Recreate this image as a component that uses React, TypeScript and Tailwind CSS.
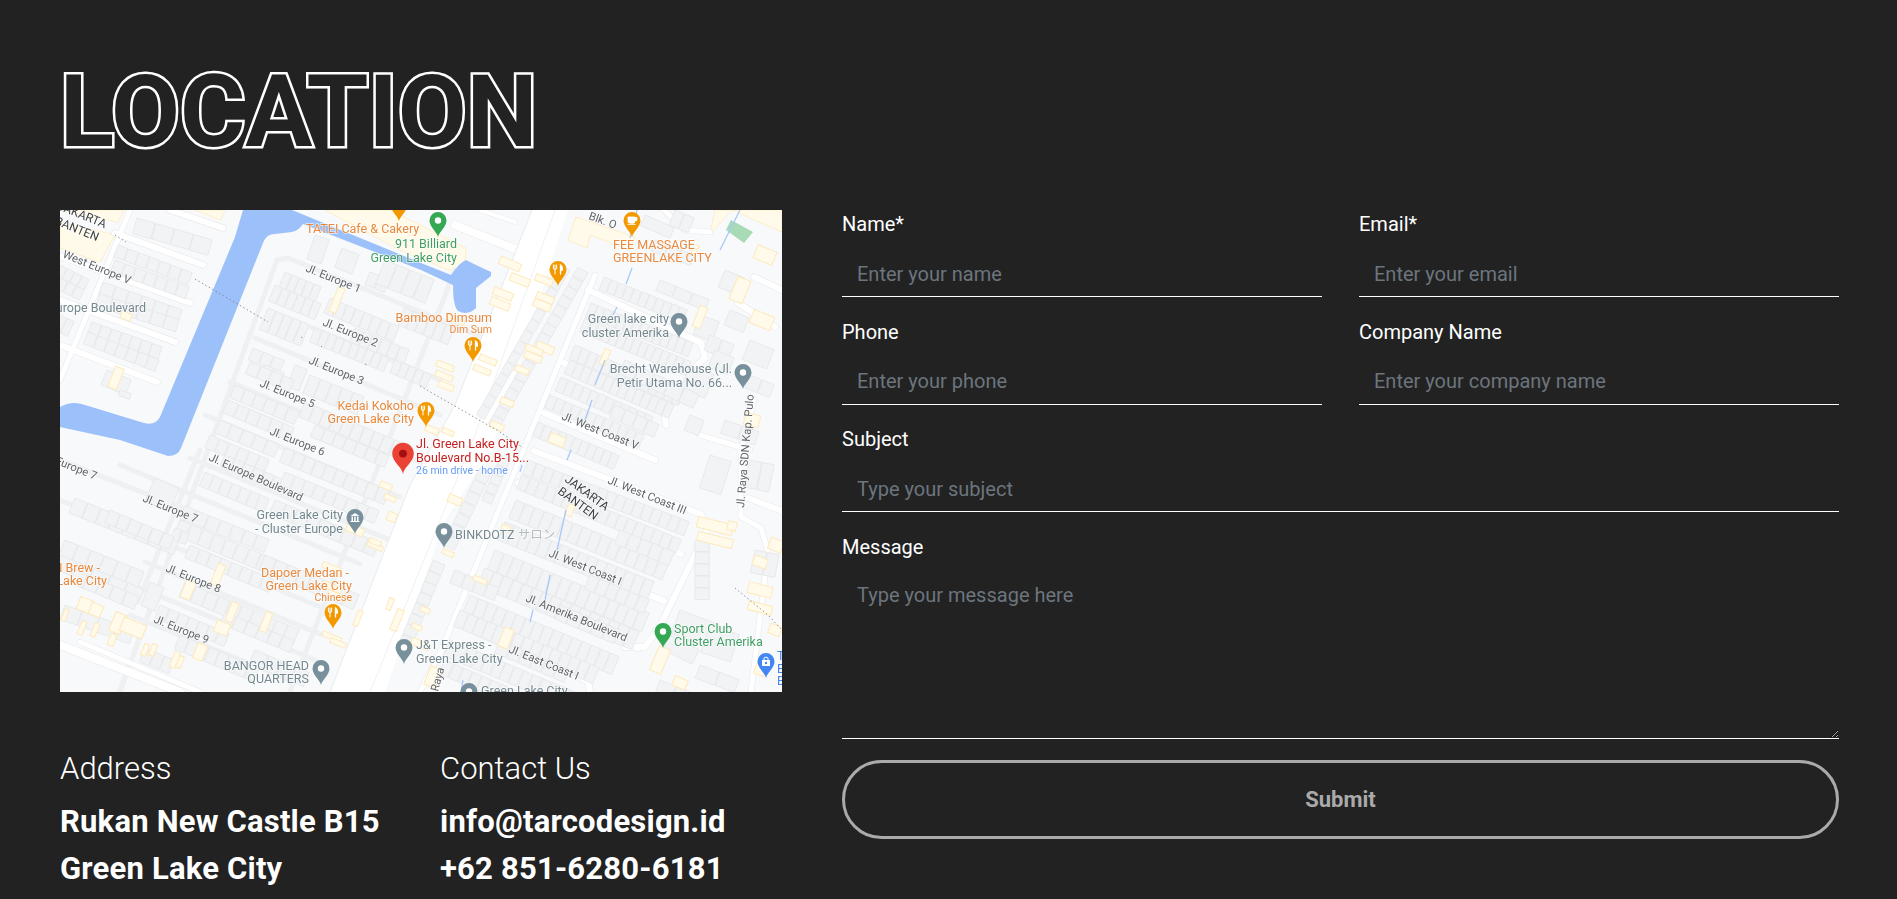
import React from "react";

// Map data, in map-local pixels
const white: [number, number[]][] = [
  [6, [110, 0, 163, 18]], [6, [55, 23, 143, 55]], [6, [0, 46, 130, 93]], [6, [0, 90, 115, 132]], [6, [0, 135, 97, 172]],
  [5, [70, 0, 0, 170]], [8, [395, 15, 470, 45]], [4, [420, 0, 455, 12]],
  [5, [535, 65, 381, 441, 360, 482]], [6, [528, 80, 641, 133, 645, 148, 636, 156]], [6, [504, 153, 604, 203, 606, 215]],
  [6, [484, 203, 595, 250]], [6, [474, 241, 641, 304, 648, 318, 601, 414, 585, 437, 565, 437]],
  [6, [458, 273, 621, 344]], [6, [451, 328, 604, 391]], [6, [421, 371, 578, 438]], [6, [398, 414, 528, 471, 530, 482]],
  [5, [694, 190, 681, 241, 681, 307, 701, 318, 708, 341, 691, 482]], [6, [694, 67, 722, 80]], [6, [678, 93, 715, 117]],
  [6, [688, 288, 722, 301]], [5, [604, 0, 625, 20, 650, 22]], [5, [640, 225, 690, 240]], [5, [20, 432, 140, 482]], [8, [0, 435, 120, 482]],
];
const gray: number[][] = [
  [217, 50, 60, 482], [217, 50, 228, 48, 361, 102, 460, 142], [238, 112, 380, 170], [195, 128, 380, 205], [170, 172, 370, 256],
  [145, 205, 340, 287], [130, 248, 330, 330], [60, 255, 300, 354], [0, 290, 280, 405], [85, 352, 260, 424], [0, 345, 255, 450],
  [70, 405, 230, 470], [395, 60, 230, 482], [0, 250, 140, 305], [140, 240, 85, 375], [60, 480, 90, 400],
];
// x1, y1, x2, y2, count, depth
const rows: number[][] = [
  [58, 35, 133, 63, 7, 11], [55, 50, 130, 77, 7, 11], [43, 72, 123, 100, 6, 11], [40, 84, 120, 110, 6, 11], [32, 112, 103, 137, 7, 11], [28, 122, 100, 150, 7, 11],
  [77, 8, 153, 30, 4, 14], [0, 55, 30, 70, 4, 10], [0, 68, 25, 80, 3, 10], [0, 105, 15, 112, 2, 14], [47, 160, 72, 170, 2, 14], [60, 180, 72, 184, 1, 5],
  [255, 25, 270, 30, 1, 22], [282, 38, 300, 45, 1, 18], [310, 62, 330, 70, 2, 12], [325, 50, 375, 70, 4, 22],
  [225, 62, 262, 77, 5, 18], [270, 88, 340, 117, 8, 14], [345, 98, 395, 118, 6, 16], [208, 98, 250, 115, 5, 20], [255, 118, 330, 148, 10, 13], [335, 150, 372, 165, 5, 12],
  [193, 138, 225, 151, 3, 11], [205, 155, 225, 163, 2, 9], [235, 155, 248, 160, 1, 20], [250, 165, 305, 187, 5, 17], [175, 175, 240, 202, 6, 12], [168, 190, 235, 218, 6, 12],
  [245, 192, 345, 234, 10, 14], [160, 210, 220, 235, 5, 12], [225, 238, 330, 281, 10, 13], [150, 225, 210, 250, 6, 12], [145, 262, 210, 289, 7, 13], [215, 290, 320, 333, 9, 13],
  [95, 268, 120, 279, 1, 22], [15, 288, 120, 330, 8, 14], [125, 296, 210, 330, 7, 12], [120, 310, 260, 368, 12, 14], [205, 345, 300, 385, 8, 14], [5, 330, 85, 362, 6, 16], [115, 318, 130, 324, 2, 10],
  [125, 372, 240, 420, 10, 14], [90, 372, 105, 378, 1, 22], [0, 345, 85, 380, 5, 13], [5, 395, 75, 420, 4, 13], [120, 425, 200, 458, 8, 13], [195, 440, 250, 463, 4, 13], [85, 438, 115, 450, 3, 13],
  [528, 63, 438, 220, 17, 10], [510, 60, 424, 210, 14, 8], [431, 264, 394, 341, 7, 11], [385, 355, 350, 440, 8, 11], [450, 250, 431, 295, 5, 9],
  [544, 67, 628, 100, 11, 12], [531, 93, 634, 133, 14, 13], [525, 108, 632, 152, 15, 13], [515, 135, 625, 182, 14, 13], [510, 150, 615, 195, 14, 13], [501, 167, 594, 207, 12, 13], [490, 185, 585, 225, 12, 12],
  [478, 212, 560, 246, 11, 13], [468, 250, 630, 312, 18, 13], [462, 265, 622, 330, 18, 13], [456, 290, 610, 352, 16, 17], [445, 312, 595, 372, 16, 17], [435, 340, 590, 403, 16, 18], [425, 358, 580, 422, 16, 17],
  [410, 385, 560, 447, 16, 17], [400, 400, 540, 458, 15, 15], [390, 430, 520, 484, 14, 15], [385, 450, 460, 482, 8, 13],
  [585, 5, 615, 18, 1, 10], [595, 30, 635, 45, 3, 10], [600, 70, 650, 90, 3, 10], [665, 60, 685, 68, 1, 16], [640, 105, 660, 112, 1, 18], [670, 100, 690, 108, 1, 14], [650, 125, 675, 135, 2, 14],
  [690, 130, 715, 140, 1, 18], [655, 140, 675, 148, 1, 16], [690, 165, 715, 175, 2, 12], [630, 205, 645, 211, 1, 14], [665, 210, 700, 222, 2, 12], [650, 245, 672, 252, 1, 30], [630, 155, 655, 165, 1, 22],
  [635, 330, 650, 330, 1, 10], [635, 342, 650, 342, 1, 10], [635, 354, 650, 354, 1, 10], [635, 366, 650, 366, 1, 10], [635, 378, 650, 378, 1, 10], [620, 400, 660, 415, 1, 22], [610, 425, 640, 440, 1, 14], [650, 415, 680, 425, 1, 25], [690, 250, 715, 255, 2, 24], [640, 455, 680, 470, 2, 12], [600, 470, 650, 490, 3, 10],
  [615, 0, 635, 8, 2, 14], [695, 340, 720, 345, 2, 20],
  [215, 75, 262, 94, 6, 15], [295, 118, 350, 140, 6, 13], [190, 152, 235, 170, 4, 11], [255, 215, 330, 246, 7, 11], [165, 245, 225, 270, 6, 11], [225, 262, 320, 301, 9, 12],
  [130, 335, 215, 370, 8, 12], [50, 300, 115, 327, 6, 12], [15, 360, 80, 387, 5, 12], [100, 395, 170, 424, 7, 12], [165, 402, 235, 431, 6, 11],
  [395, 360, 440, 378, 4, 12], [560, 320, 615, 342, 5, 13], [530, 365, 590, 390, 6, 13], [500, 395, 560, 420, 5, 13], [440, 430, 510, 460, 6, 12],
  [565, 150, 640, 185, 5, 13], [555, 195, 600, 215, 4, 12],
];
const yellow: number[][] = [
  [450, 54, 22, 8, 22], [460, 70, 20, 8, 22], [443, 84, 20, 8, 22], [440, 94, 20, 8, 22], [484, 70, 18, 7, 22], [482, 95, 18, 8, 22], [485, 88, 18, 7, 22],
  [485, 138, 18, 8, 22], [473, 147, 18, 7, 22], [474, 140, 18, 6, 22], [462, 160, 14, 6, 22], [447, 192, 14, 6, 22], [437, 216, 14, 6, 22],
  [428, 150, 18, 6, 22], [422, 160, 18, 6, 22], [385, 156, 18, 6, 22], [384, 166, 18, 6, 22], [386, 176, 16, 6, 22], [372, 220, 14, 6, 22],
  [640, 107, 22, 8, -68], [545, 147, 16, 6, -68], [635, 40, 10, 5, -68], [702, 110, 22, 14, 22], [680, 80, 24, 14, -68], [705, 45, 20, 14, 22],
  [497, 230, 16, 10, 22], [277, 90, 26, 7, -68], [56, 168, 22, 9, -68], [66, 106, 11, 7, 22], [337, 410, 22, 7, -68],
  [158, 365, 22, 8, -68], [128, 380, 18, 10, -68], [172, 402, 20, 7, -68], [206, 412, 20, 7, -68], [162, 418, 14, 12, 22], [25, 395, 14, 13, 22], [36, 400, 12, 12, 22], [58, 413, 20, 12, -68], [73, 418, 24, 14, 22],
  [5, 405, 12, 4, -68], [22, 418, 14, 5, -68], [35, 420, 14, 5, -68], [52, 430, 12, 6, -68], [85, 440, 12, 5, -68], [93, 440, 12, 5, -68], [115, 450, 16, 6, -68], [120, 452, 12, 5, -68], [140, 442, 16, 10, -68],
  [295, 320, 18, 8, 22], [272, 358, 20, 6, 22], [272, 377, 20, 6, 22], [277, 386, 20, 6, 22], [272, 427, 20, 5, 22], [278, 433, 16, 5, 22], [298, 408, 16, 5, -68],
  [326, 276, 12, 6, 22], [330, 288, 12, 5, 22], [332, 307, 9, 9, 22], [330, 394, 12, 5, -68], [315, 336, 16, 5, 22], [315, 332, 12, 5, 22],
  [388, 343, 12, 5, 22], [357, 417, 10, 5, 22], [446, 318, 9, 5, 22], [446, 428, 20, 10, -68], [420, 370, 14, 5, 22], [365, 400, 10, 5, 22], [360, 434, 18, 7, 22],
  [373, 467, 12, 20, 22], [510, 300, 12, 7, -68], [600, 450, 26, 12, -68], [655, 316, 36, 11, 14], [655, 330, 36, 9, 14], [700, 352, 14, 10, 22], [700, 380, 24, 11, 14], [700, 398, 24, 9, 14], [672, 316, 9, 9, 14],
  [692, 210, 15, 12, 14], [620, 473, 14, 10, 22], [700, 460, 10, 10, 22], [715, 420, 12, 10, 22], [716, 335, 14, 12, 22], [388, 222, 12, 5, 22], [396, 110, 18, 5, 22], [395, 290, 14, 8, 22],
];
const streams = ["M577,0 L570,28", "M572,58 L566,74", "M557,97 L553,105", "M545,150 L535,175", "M532,190 L525,210", "M511,240 L507,250", "M506,300 L497,340", "M490,365 L484,395", "M473,400 L470,412", "M403,470 L401,482", "M462,255 L460,262", "M680,0 L660,40"];

function Pin({ x, y, fill, scale = 1, dot = true, dotFill = "#fff", children }: { x: number; y: number; fill: string; scale?: number; dot?: boolean; dotFill?: string; children?: React.ReactNode }) {
  return (
    <g transform={`translate(${x} ${y}) scale(${scale})`}>
      <path d="M0,0 C-1,-5 -8.5,-10 -8.5,-16.5 A8.5,8.5 0 1 1 8.5,-16.5 C8.5,-10 1,-5 0,0Z" fill={fill} />
      {dot && <circle cx="0" cy="-16.5" r="3.2" fill={dotFill} />}
      {children}
    </g>
  );
}

function Fork() {
  return (
    <g stroke="#fff" fill="none" strokeLinecap="round">
      <path d="M-3,-21 V-12 M-4.6,-21 V-18 Q-4.6,-16.5 -3,-16.5 Q-1.4,-16.5 -1.4,-18 V-21" strokeWidth="1" />
      <path d="M2.5,-12 V-21 Q4.6,-20 4.4,-16 H2.5" strokeWidth="1.3" fill="#fff" />
    </g>
  );
}

function L({ x, y, c, a = "end", s = 12.5, children, r }: { x: number; y: number; c: string; a?: "start" | "end"; s?: number; r?: number; children: React.ReactNode }) {
  return (
    <text x={x} y={y} fill={c} fontSize={s} textAnchor={a} transform={r === undefined ? undefined : `rotate(${r} ${x} ${y})`} stroke="#fff" strokeWidth="1.4" paintOrder="stroke" strokeOpacity="0.7">
      {children}
    </text>
  );
}

const ORANGE = "#e8893e";
const GREEN = "#3f9f63";
const SLATE = "#74888f";
const ROAD = "#5f6368";
const RS = 11.2;

function MapDrawing() {
  return (
    <svg viewBox="0 0 722 482" width="722" height="482" className="block blur-[0.35px]" role="img" aria-label="Map of Green Lake City">
      <rect width="722" height="482" fill="#f8f9fb" />
      <g fill="#fffaea" stroke="#fdeec8" strokeWidth="1">
        <path d="M0,12 L55,25 L40,52 L0,38Z" />
        <path d="M0,0 L64,0 L58,12 L0,0Z" />
        <path d="M135,0 L165,0 L160,10Z" />
        <path d="M265,0 L330,0 L406,38 L404,66 L340,40Z" />
        <path d="M516,7 L575,27 L570,40 L530,25 L527,38 L508,30Z" />
        <path d="M655,0 L722,0 L722,22 L672,0 L650,24Z" />
      </g>
      <path d="M671,10 L693,22 L684,33 L666,20Z" fill="#a8dab5" />
      <g fill="none" stroke="#eef0f2" strokeWidth="5" strokeLinecap="round" strokeLinejoin="round">
        {gray.map((p, i) => <polyline key={i} points={p.join(",")} />)}
      </g>
      <g fill="none" stroke="#e8eaed" strokeLinecap="round" strokeLinejoin="round">
        {white.map(([w, p], i) => <polyline key={i} points={p.join(",")} strokeWidth={w + 1.2} />)}
      </g>
      <g fill="none" stroke="#fff" strokeLinecap="round" strokeLinejoin="round">
        {white.map(([w, p], i) => <polyline key={i} points={p.join(",")} strokeWidth={w} />)}
      </g>
      <path d="M472,0 L395,195 L350,275 L270,482 L325,482 L385,310 L431,241 L508,0Z" fill="#fff" />
      <path d="M495,0 L415,225 L310,482" fill="none" stroke="#f0f1f3" strokeWidth="1" />
      <path d="M472,0 L395,195 L350,275 L270,482" fill="none" stroke="#e8eaed" strokeWidth="1" />
      <g fill="#f2f3f5" stroke="#e5e7ea" strokeWidth="0.8">
        {rows.flatMap((r, i) => {
          const [x1, y1, x2, y2, n, d] = r;
          const dx = x2 - x1, dy = y2 - y1;
          const len = Math.hypot(dx, dy) || 1;
          const ang = (Math.atan2(dy, dx) * 180) / Math.PI;
          const w = Math.max(len / n - 0.8, 1);
          return Array.from({ length: n }, (_, k) => {
            const t = k / n;
            return (
              <rect key={`${i}-${k}`} width={w} height={d * 1.15} transform={`translate(${x1 + dx * t} ${y1 + dy * t}) rotate(${ang})`} />
            );
          });
        })}
      </g>
      <g fill="#fffaea" stroke="#fde9bd" strokeWidth="1">
        {yellow.map(([x, y, w, h, a], i) => <rect key={i} x={-w / 2} y={-h / 2} width={w} height={h} transform={`translate(${x} ${y}) rotate(${a})`} />)}
      </g>
      <path d="M183,0 L175,27 L100,207 Q95,216 84,213 L25,195 Q12,190 0,197 L0,217 L60,230 L93,241 L108,246 Q118,246 121,238 L203,33 Q206,24 215,24 L232,22 Q240,20 244,12 L232,0Z" fill="#9cc0f9" />
      <path d="M232,0 L361,53 L391,65 Q400,52 406,50 L416,55 L431,62 L431,66 L416,78 L416,98 Q408,106 398,101 Q393,96 393,75 L361,60 L238,12 L228,0Z" fill="#9cc0f9" />
      <g fill="none" stroke="#a9c8f7" strokeWidth="1.3">
        {streams.map((d, i) => <path key={i} d={d} />)}
      </g>
      <g fill="none" stroke="#777" strokeWidth="0.8" strokeDasharray="1.5 2.5">
        <path d="M55,25 L66,32 M135,69 L208,112 M241,127 L243,128 M261,136 L262,137 M305,154 L307,155 M360,176 L440,222 L463,238" />
        <path d="M525,277 L540,292 M675,378 L708,405 L722,420" />
      </g>
      <g fontFamily="Roboto, sans-serif">
        <L x={-3} y={-1} a="start" c="#3c4043" r={22} s={12}>JAKARTA</L>
        <L x={-6} y={14} a="start" c="#3c4043" r={22} s={12}>BANTEN</L>
        <L x={2} y={47} a="start" c={ROAD} r={22} s={RS}>West Europe V</L>
        <L x={86} y={102} c={SLATE}>Europe Boulevard</L>
        <L x={245} y={61} a="start" c={ROAD} r={22} s={RS}>Jl. Europe 1</L>
        <L x={262} y={115} a="start" c={ROAD} r={22} s={RS}>Jl. Europe 2</L>
        <L x={248} y={153} a="start" c={ROAD} r={22} s={RS}>Jl. Europe 3</L>
        <L x={199} y={176} a="start" c={ROAD} r={22} s={RS}>Jl. Europe 5</L>
        <L x={209} y={224} a="start" c={ROAD} r={22} s={RS}>Jl. Europe 6</L>
        <L x={148} y={250} a="start" c={ROAD} r={24} s={RS}>Jl. Europe Boulevard</L>
        <L x={-19} y={248} a="start" c={ROAD} r={22} s={RS}>Jl. Europe 7</L>
        <L x={82} y={291} a="start" c={ROAD} r={22} s={RS}>Jl. Europe 7</L>
        <L x={105} y={361} a="start" c={ROAD} r={22} s={RS}>Jl. Europe 8</L>
        <L x={93} y={412} a="start" c={ROAD} r={22} s={RS}>Jl. Europe 9</L>
        <L x={501} y={209} a="start" c={ROAD} r={22} s={RS}>Jl. West Coast V</L>
        <L x={547} y={273} a="start" c={ROAD} r={22} s={RS}>Jl. West Coast III</L>
        <L x={488} y={346} a="start" c={ROAD} r={22} s={RS}>Jl. West Coast I</L>
        <L x={465} y={391} a="start" c={ROAD} r={22} s={RS}>Jl. Amerika Boulevard</L>
        <L x={448} y={442} a="start" c={ROAD} r={22} s={RS}>Jl. East Coast I</L>
        <L x={528} y={9} a="start" c={ROAD} r={20} s={RS}>Blk. O</L>
        <L x={684} y={298} a="start" c={ROAD} r={-85} s={RS}>Jl. Raya SDN Kap. Pulo</L>
        <L x={378} y={482} a="start" c={ROAD} r={-75} s={RS}>Raya</L>
        <L x={504} y={271} a="start" c="#3c4043" r={36} s={12}>JAKARTA</L>
        <L x={497} y={283} a="start" c="#3c4043" r={36} s={12}>BANTEN</L>

        <L x={246} y={23} a="start" c={ORANGE}>TATEI Cafe &amp; Cakery</L>
        <L x={397} y={38} c={GREEN}>911 Billiard</L>
        <L x={397} y={52} c={GREEN}>Green Lake City</L>
        <L x={553} y={39} a="start" c={ORANGE}>FEE MASSAGE</L>
        <L x={553} y={52} a="start" c={ORANGE}>GREENLAKE CITY</L>
        <L x={432} y={112} c={ORANGE}>Bamboo Dimsum</L>
        <L x={432} y={123} c={ORANGE} s={10.5}>Dim Sum</L>
        <L x={609} y={113} c={SLATE}>Green lake city</L>
        <L x={609} y={127} c={SLATE}>cluster Amerika</L>
        <L x={672} y={163} c={SLATE}>Brecht Warehouse (Jl.</L>
        <L x={672} y={177} c={SLATE}>Petir Utama No. 66...</L>
        <L x={354} y={200} c={ORANGE}>Kedai Kokoho</L>
        <L x={354} y={213} c={ORANGE}>Green Lake City</L>
        <L x={356} y={238} a="start" c="#c5221f">Jl. Green Lake City</L>
        <L x={356} y={252} a="start" c="#c5221f">Boulevard No.B-15...</L>
        <L x={356} y={264} a="start" c="#669df6" s={10.5}>26 min drive - home</L>
        <L x={283} y={309} c={SLATE}>Green Lake City</L>
        <L x={283} y={323} c={SLATE}>- Cluster Europe</L>
        <L x={395} y={329} a="start" c={SLATE}>BINKDOTZ <tspan fill="#b4bcc0" fontFamily="'Noto Sans CJK JP', sans-serif">サロン</tspan></L>
        <L x={40} y={362} c={ORANGE}>N Brew -</L>
        <L x={47} y={375} c={ORANGE}>Lake City</L>
        <L x={289} y={367} c={ORANGE}>Dapoer Medan -</L>
        <L x={292} y={380} c={ORANGE}>Green Lake City</L>
        <L x={292} y={391} c={ORANGE} s={10.5}>Chinese</L>
        <L x={249} y={460} c={SLATE}>BANGOR HEAD</L>
        <L x={249} y={473} c={SLATE}>QUARTERS</L>
        <L x={356} y={439} a="start" c={SLATE}>J&amp;T Express -</L>
        <L x={356} y={453} a="start" c={SLATE}>Green Lake City</L>
        <L x={614} y={423} a="start" c={GREEN}>Sport Club</L>
        <L x={614} y={436} a="start" c={GREEN}>Cluster Amerika</L>
        <L x={421} y={485} a="start" c={SLATE}>Green Lake City</L>
        <L x={717} y={450} a="start" c="#4285f4">T</L>
        <L x={717} y={463} a="start" c="#4285f4">B</L>
        <L x={717} y={475} a="start" c="#4285f4">B</L>
      </g>
      <Pin x={339} y={11} fill="#f29900" scale={0.9} dot={false} />
      <Pin x={378} y={27} fill="#34a853" />
      <Pin x={572} y={27} fill="#f29900">
        <path d="M-4,-20 H3 V-15.5 Q3,-14 1.5,-14 H-2.5 Q-4,-14 -4,-15.5Z M3,-19.5 H5 V-16.5 H3 M-4.5,-12.5 H3.5" fill="#fff" stroke="#fff" strokeWidth="0.8" />
      </Pin>
      <Pin x={498} y={76} fill="#f29900" dot={false}><Fork /></Pin>
      <Pin x={413} y={152} fill="#f29900" dot={false}><Fork /></Pin>
      <Pin x={366} y={217} fill="#f29900" dot={false}><Fork /></Pin>
      <Pin x={273} y={419} fill="#f29900" dot={false}><Fork /></Pin>
      <Pin x={619} y={128} fill="#78909c" />
      <Pin x={683} y={179} fill="#78909c" />
      <Pin x={384} y={338} fill="#78909c" />
      <Pin x={344} y={454} fill="#78909c" />
      <Pin x={261} y={475} fill="#78909c" />
      <Pin x={409} y={498} fill="#78909c" />
      <Pin x={295} y={324} fill="#78909c" dot={false}>
        <path d="M-4.5,-18 L0,-21 L4.5,-18Z M-4.5,-13 H4.5 V-12 H-4.5Z M-3.5,-17.5 H-2 V-13 H-3.5Z M-0.8,-17.5 H0.8 V-13 H-0.8Z M2,-17.5 H3.5 V-13 H2Z" fill="#fff" />
      </Pin>
      <Pin x={603} y={438} fill="#34a853" />
      <Pin x={706} y={468} fill="#4285f4" dot={false}>
        <path d="M-4,-18 H4 V-12 H-4Z" fill="#fff" />
        <path d="M-2,-18 V-20 Q0,-22 2,-20 V-18" fill="none" stroke="#fff" strokeWidth="1" />
        <circle cx="0" cy="-15" r="1.2" fill="#4285f4" />
      </Pin>
      <g transform="translate(343 264) scale(1.2)">
        <path d="M0,0 C-1,-6 -9,-10 -9,-17 A9,9 0 1 1 9,-17 C9,-10 1,-6 0,0Z" fill="#ea4335" />
        <circle cx="0" cy="-17" r="3.3" fill="#a50e0e" />
      </g>
    </svg>
  );
}

function Field({ label, placeholder, className = "" }: { label: string; placeholder: string; className?: string }) {
  return (
    <div className={`flex flex-col h-[87px] mb-[20.5px] ${className}`}>
      <label className="h-[28px] text-[20px] leading-[28px] text-white">{label}</label>
      <input
        placeholder={placeholder}
        className="mt-[7px] h-[52px] w-full bg-transparent border-b border-white px-[15px] pt-[6px] text-[20px] text-white outline-none placeholder:text-[#6c757d]"
      />
    </div>
  );
}

function Info({ title, lines }: { title: string; lines: string[] }) {
  return (
    <div>
      <h3 className="text-[31px] font-light leading-[36px] text-white">{title}</h3>
      <div className="mt-[11px] flex flex-col text-[31px] font-bold leading-[47px] tracking-[0.2px] text-white">
        {lines.map((l) => <p key={l}>{l}</p>)}
      </div>
    </div>
  );
}

export default function App() {
  return (
    <div className="min-h-[899px] overflow-hidden bg-[#222222] pl-[60px] pr-[58px] pt-[56px] font-[Roboto,sans-serif]">
      <h1 className="h-[154px] text-[100px] font-bold leading-[111px] text-[#222222] [-webkit-text-stroke:5px_#ffffff] [paint-order:stroke_fill]">LOCATION</h1>
      <div className="flex gap-[60px]">
        <div className="w-[722px] shrink-0">
          <div className="h-[482px] overflow-hidden">
            <MapDrawing />
          </div>
          <div className="mt-[59px] grid grid-cols-[380px_1fr]">
            <Info title="Address" lines={["Rukan New Castle B15", "Green Lake City"]} />
            <Info title="Contact Us" lines={["info@tarcodesign.id", "+62 851-6280-6181"]} />
          </div>
        </div>
        <form className="min-w-0 flex-1">
          <div className="grid grid-cols-2 gap-x-[37px]">
            <Field label="Name*" placeholder="Enter your name" />
            <Field label="Email*" placeholder="Enter your email" />
            <Field label="Phone" placeholder="Enter your phone" />
            <Field label="Company Name" placeholder="Enter your company name" />
            <Field label="Subject" placeholder="Type your subject" className="col-span-2" />
          </div>
          <div className="flex flex-col">
            <label className="h-[28px] text-[20px] leading-[28px] text-white">Message</label>
            <textarea
              placeholder="Type your message here"
              className="h-[178px] w-full bg-transparent border-b border-white px-[15px] pt-[19px] text-[20px] text-white outline-none placeholder:text-[#6c757d]"
            />
          </div>
          <button type="button" className="mt-[21px] h-[79px] w-full rounded-full border-[3px] border-[#aaaaaa] text-[22px] font-bold text-[#aaaaaa]">
            Submit
          </button>
        </form>
      </div>
    </div>
  );
}
